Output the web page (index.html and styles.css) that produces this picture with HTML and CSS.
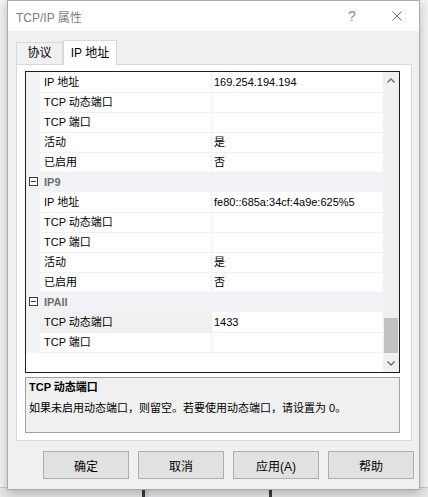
FILE: index.html
```html
<!DOCTYPE html>
<html lang="zh-CN">
<head>
    <meta charset="UTF-8">
    <title>TCP/IP 属性</title>
    <link rel="stylesheet" href="styles.css">
</head>
<body>
    <div class="desktop-strip"></div>

    <div class="window">
        <div class="titlebar">
            <span class="title">TCP/IP 属性</span>
            <span class="help">?</span>
            <span class="close">
                <svg width="10" height="10" viewBox="0 0 10 10"><path d="M0.5 0.5 L9.5 9.5 M9.5 0.5 L0.5 9.5" stroke="#7a7a7a" stroke-width="1" fill="none"/></svg>
            </span>
        </div>

        <div class="dialog-body">
            <div class="tabs">
                <div class="tab">协议</div>
                <div class="tab active">IP 地址</div>
            </div>

            <div class="panel">
                <div class="grid">
                    <div class="rows">
                        <div class="row"><div class="gutter"></div><div class="name">IP 地址</div><div class="value">169.254.194.194</div></div>
                        <div class="row"><div class="gutter"></div><div class="name">TCP 动态端口</div><div class="value"></div></div>
                        <div class="row"><div class="gutter"></div><div class="name">TCP 端口</div><div class="value"></div></div>
                        <div class="row"><div class="gutter"></div><div class="name">活动</div><div class="value">是</div></div>
                        <div class="row"><div class="gutter"></div><div class="name">已启用</div><div class="value">否</div></div>

                        <div class="row category"><div class="gutter"><span class="toggle"></span></div><div class="name">IP9</div></div>
                        <div class="row"><div class="gutter"></div><div class="name">IP 地址</div><div class="value">fe80::685a:34cf:4a9e:625%5</div></div>
                        <div class="row"><div class="gutter"></div><div class="name">TCP 动态端口</div><div class="value"></div></div>
                        <div class="row"><div class="gutter"></div><div class="name">TCP 端口</div><div class="value"></div></div>
                        <div class="row"><div class="gutter"></div><div class="name">活动</div><div class="value">是</div></div>
                        <div class="row"><div class="gutter"></div><div class="name">已启用</div><div class="value">否</div></div>

                        <div class="row category"><div class="gutter"><span class="toggle"></span></div><div class="name">IPAll</div></div>
                        <div class="row selected"><div class="gutter"></div><div class="name">TCP 动态端口</div><div class="value">1433</div></div>
                        <div class="row"><div class="gutter"></div><div class="name">TCP 端口</div><div class="value"></div></div>
                    </div>

                    <div class="scrollbar">
                        <div class="sb-arrow">
                            <svg width="8" height="5" viewBox="0 0 8 5"><path d="M0.5 4.5 L4 1 L7.5 4.5" stroke="#6a6a6a" stroke-width="1.3" fill="none"/></svg>
                        </div>
                        <div class="sb-track"><div class="sb-thumb"></div></div>
                        <div class="sb-arrow">
                            <svg width="8" height="5" viewBox="0 0 8 5"><path d="M0.5 0.5 L4 4 L7.5 0.5" stroke="#6a6a6a" stroke-width="1.3" fill="none"/></svg>
                        </div>
                    </div>
                </div>

                <div class="description">
                    <div class="desc-title">TCP 动态端口</div>
                    <div class="desc-text">如果未启用动态端口，则留空。若要使用动态端口，请设置为 0。</div>
                </div>
            </div>

            <div class="buttons">
                <button class="btn">确定</button>
                <button class="btn">取消</button>
                <button class="btn">应用(A)</button>
                <button class="btn">帮助</button>
            </div>
        </div>
    </div>
</body>
</html>
```

FILE: styles.css
```css
body {
    margin: 0;
    width: 428px;
    height: 497px;
    position: relative;
    overflow: hidden;
    font-family: "Liberation Sans", "Noto Sans CJK SC", sans-serif;
    font-size: 11px;
    color: #000;
    background: #f3f3f3;
}

/* bits of the desktop that peek out under the dialog */
.desktop-strip {
    position: absolute;
    left: 0;
    right: 0;
    bottom: 0;
    height: 10px;
    background:
        linear-gradient(to right, transparent 142px, #3a3a3a 142px, #3a3a3a 145px, #d9cfe3 145px, #d9cfe3 149px, transparent 149px),
        linear-gradient(to right, transparent 269px, #3a3a3a 269px, #3a3a3a 272px, transparent 272px),
        linear-gradient(to bottom, #c8c8c8 0, #c8c8c8 1px, #e6e6e6 1px);
}

.window {
    position: absolute;
    left: 7px;
    top: 0;
    width: 413px;
    height: 490px;
    box-sizing: border-box;
    border: 1px solid #a9a9a9;
    background: #f0f0f0;
    box-shadow: 0 3px 10px rgba(0, 0, 0, 0.25);
}

.titlebar {
    height: 30px;
    display: flex;
    align-items: center;
    background: #fff;
}

.title {
    flex: 1;
    padding-left: 8px;
    font-size: 12px;
    color: #808080;
}

.help {
    width: 46px;
    text-align: center;
    font-size: 14px;
    color: #8a8a8a;
}

.close {
    width: 44px;
    display: flex;
    justify-content: center;
}

.dialog-body {
    padding: 9px 7px 0 8px;
}

.tabs {
    display: flex;
    align-items: flex-end;
    height: 24px;
}

.tab {
    box-sizing: border-box;
    height: 22px;
    width: 47px;
    border: 1px solid #d9d9d9;
    border-bottom: none;
    background: #f0f0f0;
    font-size: 12px;
    line-height: 21px;
    text-align: center;
}

.tab.active {
    height: 25px;
    width: 54px;
    margin-bottom: -1px;
    background: #fff;
    line-height: 24px;
    position: relative;
    z-index: 1;
}

.panel {
    box-sizing: border-box;
    width: 396px;
    height: 377px;
    border: 1px solid #d9d9d9;
    background: #fff;
    padding: 6px 0 0 8px;
}

.grid {
    box-sizing: border-box;
    width: 375px;
    height: 302px;
    border: 1px solid #1e1e1e;
    display: flex;
}

.rows {
    flex: 1;
}

.row {
    display: grid;
    grid-template-columns: 14px 172px 1fr;
    height: 20px;
    line-height: 20px;
}

.gutter {
    background: #f0f2f6;
}

.name {
    padding-left: 4px;
    border-right: 1px solid #f0f0f0;
    border-bottom: 1px solid #f0f0f0;
    white-space: nowrap;
}

.value {
    padding-left: 2px;
    border-bottom: 1px solid #f0f0f0;
    white-space: nowrap;
}

.row.selected .name {
    background: #f0f0f0;
}

.row.category {
    grid-template-columns: 14px 1fr;
    background: #f0f2f6;
}

.row.category .name {
    border: none;
    font-weight: bold;
    color: #6d6d6d;
    line-height: 21px;
}

.toggle {
    display: block;
    position: relative;
    width: 9px;
    height: 9px;
    box-sizing: border-box;
    margin: 5px 0 0 3px;
    border: 1px solid #3c3c3c;
    background: #fff;
}

.toggle::after {
    content: '';
    position: absolute;
    left: 1px;
    right: 1px;
    top: 3px;
    height: 1px;
    background: #3c3c3c;
}

.scrollbar {
    width: 16px;
    display: flex;
    flex-direction: column;
    background: #f0f0f0;
}

.sb-arrow {
    height: 17px;
    display: flex;
    align-items: center;
    justify-content: center;
}

.sb-track {
    flex: 1;
}

.sb-thumb {
    margin: 229px 1px 0 1px;
    height: 35px;
    background: #c1c1c1;
}

.description {
    box-sizing: border-box;
    width: 375px;
    height: 56px;
    margin-top: 4px;
    border: 1px solid #a0a0a0;
    background: #f0f0f0;
    padding: 2px 3px;
    line-height: 15px;
}

.desc-title {
    font-weight: bold;
}

.desc-text {
    margin-top: 6px;
}

.buttons {
    display: flex;
    justify-content: flex-end;
    gap: 9px;
    margin-top: 10px;
    margin-right: -2px;
}

.btn {
    width: 86px;
    height: 28px;
    box-sizing: border-box;
    border: 1px solid #adadad;
    background: #e1e1e1;
    font-family: "Liberation Sans", "Noto Sans CJK SC", sans-serif;
    font-size: 12px;
    color: #000;
    padding: 0;
}
```
